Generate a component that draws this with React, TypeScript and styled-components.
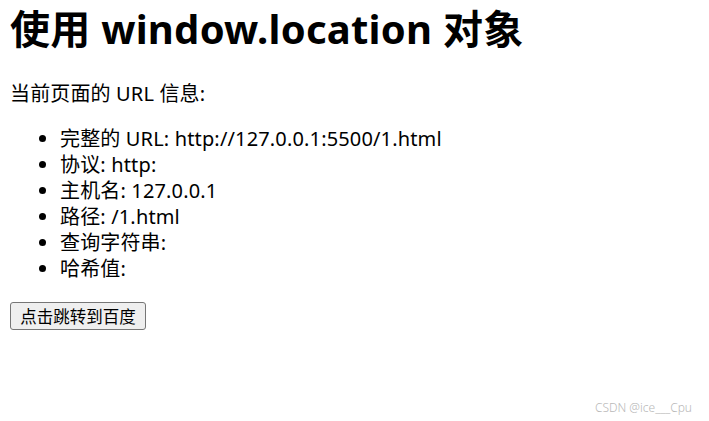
import React from "react";
import styled, { createGlobalStyle } from "styled-components";

const Global = createGlobalStyle`
  html, body { margin: 0; padding: 0; background: #fff; }
  body {
    font-family: "Noto Sans", "Noto Sans CJK SC", sans-serif;
    color: #000;
  }
`;

const Page = styled.div`
  position: relative;
  width: 709px;
  height: 421px;
  box-sizing: border-box;
  padding: 6px 10px 0 10px;
  overflow: hidden;
`;

const Title = styled.h1`
  margin: 0;
  font-size: 40px;
  line-height: 46px;
  font-weight: 700;
  letter-spacing: 0.25px;
`;

const Para = styled.p`
  margin: 29px 0 0 0;
  font-size: 20px;
  line-height: 26px;
  letter-spacing: 0.15px;
`;

const List = styled.ul`
  margin: 19px 0 0 0;
  padding-left: 50px;
  font-size: 20px;
  line-height: 26px;
  letter-spacing: 0.15px;
`;

const Item = styled.li`
  list-style: disc;
`;

const Button = styled.button`
  margin-top: 20px;
  display: block;
  width: 136px;
  height: 28px;
  padding: 0;
  font-family: "Noto Sans CJK SC", sans-serif;
  font-size: 16.5px;
  line-height: 26px;
  color: #000;
  background: #efefef;
  border: 1px solid #767676;
  border-radius: 3px;
`;

const Watermark = styled.div`
  position: absolute;
  right: 17px;
  bottom: 5px;
  font-family: "Noto Sans", "Noto Sans CJK SC", sans-serif;
  font-size: 12px;
  font-weight: 300;
  color: #b8b8b8;
`;

const items: [string, string][] = [
  ["完整的 URL", "http://127.0.0.1:5500/1.html"],
  ["协议", "http:"],
  ["主机名", "127.0.0.1"],
  ["路径", "/1.html"],
  ["查询字符串", ""],
  ["哈希值", ""],
];

export default function App() {
  return (
    <Page>
      <Global />
      <Title>使用 window.location 对象</Title>
      <Para>当前页面的 URL 信息:</Para>
      <List>
        {items.map(([k, v]) => (
          <Item key={k}>
            {k}: {v}
          </Item>
        ))}
      </List>
      <Button>点击跳转到百度</Button>
      <Watermark>CSDN @ice___Cpu</Watermark>
    </Page>
  );
}
